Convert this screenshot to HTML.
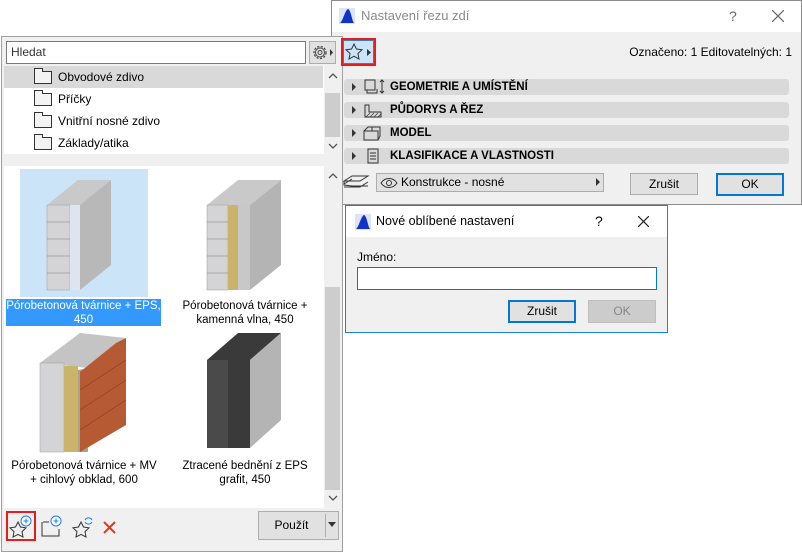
<!DOCTYPE html>
<html><head><meta charset="utf-8"><style>
*{box-sizing:border-box;margin:0;padding:0}
body{width:802px;height:552px;background:#fff;position:relative;overflow:hidden;font-family:"Liberation Sans",sans-serif;font-size:12px;color:#000}
.a{position:absolute}
.btn{position:absolute;background:#e1e1e1;border:1px solid #adadad;text-align:center;font-size:12px}
.bar{position:absolute;left:344px;width:445px;height:16px;background:#d9d9d9;border-radius:3px;font-weight:bold;font-size:11.5px;line-height:16px}
.tri{position:absolute;width:0;height:0;border-left:4px solid #333;border-top:4px solid transparent;border-bottom:4px solid transparent}
.row{position:absolute;left:4px;width:319px;height:22px;line-height:22px;font-size:12px}
.fold{position:absolute;left:30px;top:5px;width:18px;height:13px;border:1px solid #333;background:#f3f3f3}
.fold:before{content:"";position:absolute;left:-1px;top:-4px;width:7px;height:3px;border:1px solid #333;border-bottom:none;background:#f3f3f3}
.lbl{position:absolute;text-align:center;font-size:11.5px;line-height:14px}
</style></head><body>

<!-- right dialog -->
<div class="a" style="left:331px;top:0;width:471px;height:205px;background:#f0f0f0;border:1px solid #8c8c8c"></div>
<div class="a" style="left:332px;top:1px;width:469px;height:31px;background:#fff"></div>
<svg class="a" style="left:339px;top:8px" width="16" height="16"><rect width="16" height="16" fill="#dfe4f4"/><path d="M1 15C4 13 6 2 9 1c3 1 4 12 6 14z" fill="#1034c8"/></svg>
<div class="a" style="left:361px;top:8px;font-size:13px;color:#8a8a8a">Nastavení řezu zdí</div>
<div class="a" style="left:729px;top:8px;font-size:14px;color:#666">?</div>
<svg class="a" style="left:772px;top:10px" width="12" height="12"><path d="M0 0l12 12M12 0L0 12" stroke="#666" stroke-width="1.2"/></svg>
<div class="a" style="right:10px;top:45px;font-size:12px">Označeno: 1 Editovatelných: 1</div>

<div class="bar" style="top:79px"><span style="position:absolute;left:46px">GEOMETRIE A UMÍSTĚNÍ</span></div>
<div class="bar" style="top:102px"><span style="position:absolute;left:46px">PŮDORYS A ŘEZ</span></div>
<div class="bar" style="top:125px"><span style="position:absolute;left:46px">MODEL</span></div>
<div class="bar" style="top:148px"><span style="position:absolute;left:46px">KLASIFIKACE A VLASTNOSTI</span></div>
<div class="tri" style="left:352px;top:83px"></div><div class="tri" style="left:352px;top:106px"></div><div class="tri" style="left:352px;top:129px"></div><div class="tri" style="left:352px;top:152px"></div>
<svg class="a" style="left:362px;top:78px" width="26" height="90">
 <rect x="3" y="2" width="10" height="10" fill="none" stroke="#333"/><path d="M5 12v3h10v-4" fill="none" stroke="#333"/><path d="M20 2v13M18 4l2-2 2 2M18 13l2 2 2-2" fill="none" stroke="#333"/>
 <path d="M3 27v12h16v-5H7v-7z" fill="none" stroke="#333"/><path d="M4 39l4-4M8 39l4-4M12 39l4-4M16 39l3-3" stroke="#333" stroke-width=".7"/>
 <path d="M2 53h14v9H2zM2 53l4-4h12v9l-2 4M10 49v4" fill="none" stroke="#333"/>
 <rect x="6" y="71" width="10" height="14" fill="none" stroke="#333"/><path d="M8 75h6M8 78h6M8 81h6" stroke="#333"/>
</svg>
<svg class="a" style="left:342px;top:172px" width="28" height="18"><path d="M2 9l8-5h16l-8 5zM2 12l8-5M2 9v4l8 1h16M2 15h16l8-5" fill="none" stroke="#333"/></svg>
<div class="a" style="left:376px;top:173px;width:228px;height:19px;background:#e1e1e1;border:1px solid #adadad;padding-left:24px;line-height:17px">Konstrukce - nosné</div>
<svg class="a" style="left:380px;top:177px" width="18" height="12"><path d="M1 6c4-6 12-6 16 0-4 6-12 6-16 0z" fill="none" stroke="#333"/><circle cx="9" cy="6" r="2.5" fill="none" stroke="#333"/></svg>
<div class="tri" style="left:596px;top:178px"></div>
<div class="btn" style="left:630px;top:173px;width:68px;height:22px;line-height:20px">Zrušit</div>
<div class="btn" style="left:716px;top:173px;width:68px;height:23px;line-height:19px;border:2px solid #0078d7">OK</div>

<!-- left panel -->
<div class="a" style="left:1px;top:36px;width:342px;height:516px;background:#f0f0f0;border:1px solid #a0a0a0"></div>
<div class="a" style="left:6px;top:41px;width:300px;height:23px;background:#fff;border:1px solid #7a7a7a;padding:3px 4px;font-size:12px;color:#333">Hledat</div>
<div class="a" style="left:309px;top:41px;width:27px;height:23px;background:#e1e1e1;border:1px solid #adadad"></div>
<svg class="a" style="left:311px;top:43px" width="24" height="19"><circle cx="9" cy="9.5" r="6" fill="none" stroke="#444" stroke-width="1.2" stroke-dasharray="2.2 1.4"/><circle cx="9" cy="9.5" r="4.5" fill="none" stroke="#444"/><circle cx="9" cy="9.5" r="2" fill="none" stroke="#444"/><path d="M19 6l3 3.5-3 3.5z" fill="#333"/></svg>
<div class="a" style="left:4px;top:66px;width:336px;height:88px;background:#fff"></div>
<div class="row" style="top:66px;background:#d9d9d9"><div class="fold"></div><span style="position:absolute;left:54px">Obvodové zdivo</span></div>
<div class="row" style="top:88px"><div class="fold"></div><span style="position:absolute;left:54px">Příčky</span></div>
<div class="row" style="top:110px"><div class="fold"></div><span style="position:absolute;left:54px">Vnitřní nosné zdivo</span></div>
<div class="row" style="top:132px"><div class="fold"></div><span style="position:absolute;left:54px">Základy/atika</span></div>
<div class="a" style="left:324px;top:66px;width:16px;height:88px;background:#f0f0f0"></div>
<div class="a" style="left:325px;top:93px;width:15px;height:44px;background:#cdcdcd"></div>
<svg class="a" style="left:327px;top:72px" width="12" height="80"><path d="M2 6l4-4 4 4" fill="none" stroke="#555" stroke-width="1.3"/><path d="M2 72l4 4 4-4" fill="none" stroke="#555" stroke-width="1.3"/></svg>

<div class="a" style="left:4px;top:166px;width:336px;height:342px;background:#fff"></div>
<div class="a" style="left:324px;top:166px;width:16px;height:342px;background:#f0f0f0"></div>
<div class="a" style="left:325px;top:287px;width:15px;height:203px;background:#cdcdcd"></div>
<svg class="a" style="left:327px;top:172px" width="12" height="332"><path d="M2 6l4-4 4 4" fill="none" stroke="#555" stroke-width="1.3"/><path d="M2 324l4 4 4-4" fill="none" stroke="#555" stroke-width="1.3"/></svg>

<div class="a" style="left:20px;top:169px;width:128px;height:128px;background:#cce4f7"></div>
<svg class="a" style="left:0;top:160px" width="322" height="300">
 <polygon points="47,45 78,20 111,20 80,45" fill="#c9c9c9"/>
 <polygon points="47,45 70,45 70,130 47,130" fill="#d4d4d6" stroke="#9a9a9a" stroke-width=".5"/>
 <polygon points="70,45 80,45 80,130 70,130" fill="#dde6ee"/>
 <polygon points="80,45 111,20 111,105 80,130" fill="#b8b8b8"/>
 <g stroke="#999" stroke-width=".8"><line x1="47" y1="62" x2="70" y2="62"/><line x1="47" y1="79" x2="70" y2="79"/><line x1="47" y1="96" x2="70" y2="96"/><line x1="47" y1="113" x2="70" y2="113"/></g>
 <polygon points="207,45 238,20 281,20 250,45" fill="#c9c9c9"/>
 <polygon points="207,45 228,45 228,130 207,130" fill="#d4d4d6" stroke="#9a9a9a" stroke-width=".5"/>
 <polygon points="228,45 238,45 238,130 228,130" fill="#c9b46a"/>
 <polygon points="238,45 250,45 250,130 238,130" fill="#c8c8c8"/>
 <polygon points="250,45 281,20 281,105 250,130" fill="#b4b4b4"/>
 <g stroke="#999" stroke-width=".8"><line x1="207" y1="62" x2="228" y2="62"/><line x1="207" y1="79" x2="228" y2="79"/><line x1="207" y1="96" x2="228" y2="96"/><line x1="207" y1="113" x2="228" y2="113"/></g>
 <polygon points="40,203 80,173 126,178 88,208" fill="#c4c4c4"/>
 <polygon points="40,203 64,203 64,292 40,292" fill="#d4d4d6" stroke="#9a9a9a" stroke-width=".5"/>
 <polygon points="64,206 78,206 78,292 64,292" fill="#c9b46a"/>
 <polygon points="78,210 88,208 88,292 78,292" fill="#aaa38a"/>
 <polygon points="80,212 116,183 126,178 126,265 80,292" fill="#b65a34"/>
 <g stroke="#8a3c20" stroke-width=".6"><line x1="80" y1="230" x2="126" y2="200"/><line x1="80" y1="250" x2="126" y2="220"/><line x1="80" y1="270" x2="126" y2="240"/></g>
 <polygon points="207,200 238,173 281,173 250,200" fill="#3a3a3a"/>
 <polygon points="207,200 228,200 228,288 207,288" fill="#4a4a4a"/>
 <polygon points="228,200 250,200 250,288 228,288" fill="#3a3a3a"/>
 <polygon points="250,200 281,173 281,260 250,288" fill="#b4b4b4"/>
</svg>
<div class="a" style="left:6px;top:299px;width:155px;height:27px;background:#3399ff"></div>
<div class="lbl" style="left:6px;top:299px;width:155px;color:#fff">Pórobetonová tvárnice + EPS,<br>450</div>
<div class="lbl" style="left:165px;top:299px;width:160px">Pórobetonová tvárnice +<br>kamenná vlna, 450</div>
<div class="lbl" style="left:4px;top:459px;width:160px">Pórobetonová tvárnice + MV<br>+ cihlový obklad, 600</div>
<div class="lbl" style="left:165px;top:459px;width:160px">Ztracené bednění z EPS<br>grafit, 450</div>

<div class="a" style="left:6px;top:511px;width:30px;height:30px;border:2px solid #e81c1c"></div>
<svg class="a" style="left:8px;top:513px" width="110" height="26">
 <path d="M10 9l2.5 5 5.5.8-4 3.8 1 5.4-5-2.6-5 2.6 1-5.4-4-3.8 5.5-.8z" fill="none" stroke="#333"/>
 <circle cx="18" cy="8" r="5" fill="#fff" stroke="#1e7ee6"/><path d="M15.5 8h5M18 5.5v5" stroke="#1e7ee6"/>
 <path d="M35 9h6M34 9v14h17v-7" fill="none" stroke="#333"/>
 <circle cx="48" cy="8" r="5" fill="#fff" stroke="#1e7ee6"/><path d="M45.5 8h5M48 5.5v5" stroke="#1e7ee6"/>
 <path d="M73 9l2.5 5 5.5.8-4 3.8 1 5.4-5-2.6-5 2.6 1-5.4-4-3.8 5.5-.8z" fill="none" stroke="#333"/>
 <path d="M77 7a4 4 0 0 1 7 0M84 9a4 4 0 0 1-7 0" fill="none" stroke="#1e7ee6"/>
 <path d="M96 9l11 11M107 9l-11 11" stroke="#e8381c" stroke-width="2"/>
</svg>
<div class="btn" style="left:258px;top:511px;width:81px;height:29px;line-height:27px;padding-right:14px">Použít</div>
<div class="a" style="left:325px;top:514px;width:1px;height:23px;background:#adadad"></div>
<div class="a" style="left:328px;top:522px;border-top:5px solid #333;border-left:4px solid transparent;border-right:4px solid transparent"></div>

<!-- star button on top -->
<div class="a" style="left:341px;top:38px;width:35px;height:28px;border:2px solid #e81c1c"></div>
<div class="a" style="left:343px;top:40px;width:31px;height:24px;background:#cce4f7;border:1px solid #3c7fb1"></div>
<svg class="a" style="left:344px;top:42px" width="30" height="20"><path d="M10 2l2.4 5 5.6.7-4.1 3.8 1.1 5.5-5-2.8-5 2.8 1.1-5.5L2 7.7l5.6-.7z" fill="none" stroke="#333"/><path d="M23 7l4 3.5-4 3.5z" fill="#333"/></svg>

<!-- second dialog -->
<div class="a" style="left:345px;top:205px;width:323px;height:128px;background:#f0f0f0;border:1px solid #1883d7"></div>
<div class="a" style="left:346px;top:206px;width:321px;height:31px;background:#fff"></div>
<svg class="a" style="left:355px;top:214px" width="16" height="16"><rect width="16" height="16" fill="#dfe4f4"/><path d="M1 15C4 13 6 2 9 1c3 1 4 12 6 14z" fill="#1034c8"/></svg>
<div class="a" style="left:376px;top:214px;font-size:12.5px">Nové oblíbené nastavení</div>
<div class="a" style="left:595px;top:213px;font-size:14px">?</div>
<svg class="a" style="left:638px;top:216px" width="11" height="11"><path d="M0 0l11 11M11 0L0 11" stroke="#222" stroke-width="1.2"/></svg>
<div class="a" style="left:357px;top:250px;font-size:12px">Jméno:</div>
<div class="a" style="left:357px;top:267px;width:300px;height:23px;background:#fff;border:1px solid #0078d7"></div>
<div class="btn" style="left:508px;top:300px;width:68px;height:23px;line-height:19px;border:2px solid #0078d7">Zrušit</div>
<div class="btn" style="left:588px;top:300px;width:68px;height:23px;line-height:21px;background:#ccc;border-color:#bfbfbf;color:#888">OK</div>
</body></html>
